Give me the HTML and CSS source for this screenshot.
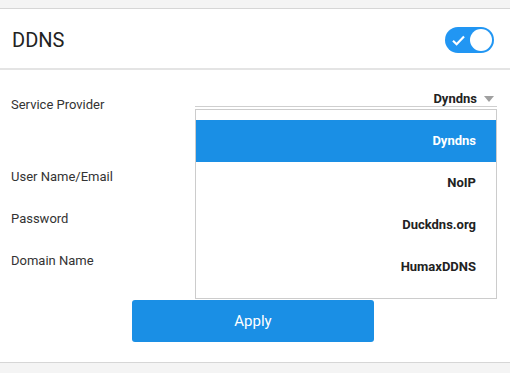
FILE: index.html
```html
<!DOCTYPE html>
<html lang="en">

<head>
    <meta charset="UTF-8">
    <meta name="viewport" content="width=device-width, initial-scale=1">
    <title>DDNS</title>
    <link rel="stylesheet" href="styles.css">
</head>

<body>
    <section class="card">
        <header class="card-header">
            <h2>DDNS</h2>
            <label class="switch on">
                <svg class="switch-check" width="13" height="11" viewBox="0 0 13 11">
                    <path d="M1 5.8 L4.6 9.2 L12 1.6" fill="none" stroke="#fff" stroke-width="2.2"/>
                </svg>
                <span class="switch-knob"></span>
            </label>
        </header>

        <form class="ddns-form">
            <div class="row row-select">
                <span class="label">Service Provider</span>
                <div class="select">
                    <span class="select-value">Dyndns</span>
                    <span class="select-arrow"></span>
                    <ul class="options">
                        <li class="active">Dyndns</li>
                        <li>NoIP</li>
                        <li>Duckdns.org</li>
                        <li>HumaxDDNS</li>
                    </ul>
                </div>
            </div>
            <div class="row row-gap">
                <span class="label">User Name/Email</span>
            </div>
            <div class="row">
                <span class="label">Password</span>
            </div>
            <div class="row">
                <span class="label">Domain Name</span>
            </div>
            <button type="button" class="apply">Apply</button>
        </form>
    </section>
</body>

</html>
```

FILE: styles.css
```css
/* Base */
* {
    margin: 0;
    padding: 0;
    box-sizing: border-box;
}

body {
    font-family: Roboto, Arial, sans-serif;
    background-color: #f4f4f4;
    color: #333;
    padding-top: 8px;
}

/* Card */
.card {
    background-color: #fff;
    border-top: 1px solid #d6d6d6;
    border-bottom: 1px solid #d6d6d6;
}

.card-header {
    height: 61px;
    padding: 3px 16px 0 12px;
    display: flex;
    align-items: center;
    justify-content: space-between;
    border-bottom: 2px solid #e4e4e4;
}

.card-header h2 {
    font-size: 20px;
    font-weight: 400;
    color: #222;
}

/* Toggle */
.switch {
    width: 49px;
    height: 26px;
    border-radius: 13px;
    background-color: #2196f3;
    display: flex;
    align-items: center;
    justify-content: space-between;
    padding: 0 2px 0 7px;
}

.switch-check {
    display: block;
}

.switch-knob {
    width: 22px;
    height: 22px;
    border-radius: 50%;
    background-color: #fff;
}

/* Form */
.ddns-form {
    padding: 12px 13px 20px 11px;
}

.row {
    display: flex;
    height: 42px;
    align-items: center;
}

.row-select {
    align-items: flex-start;
}

.row-gap {
    margin-top: 31px;
}

.label {
    width: 184px;
    font-size: 13px;
    line-height: 42px;
    padding-top: 2px;
    color: #333;
}

/* Select */
.select {
    position: relative;
    flex: 1;
    margin-top: 9px;
    height: 16px;
    border-bottom: 1px solid #cfcfcf;
    display: flex;
    justify-content: flex-end;
    align-items: center;
    padding-right: 3px;
}

.select-value {
    font-size: 13px;
    font-weight: 700;
    color: #222;
    line-height: 15px;
}

.select-arrow {
    margin-left: 7px;
    width: 0;
    height: 0;
    border-left: 5px solid transparent;
    border-right: 5px solid transparent;
    border-top: 6px solid #a0a0a0;
}

.options {
    position: absolute;
    top: 18px;
    left: 0;
    right: 0;
    list-style: none;
    background-color: #fff;
    border: 1px solid #cccccc;
    padding: 10px 0;
}

.options li {
    height: 42px;
    line-height: 42px;
    text-align: right;
    padding-right: 20px;
    font-size: 13px;
    font-weight: 700;
    color: #222;
}

.options li.active {
    background-color: #1a8fe5;
    color: #fff;
}

/* Button */
.apply {
    display: block;
    margin: 19px 0 0 121px;
    width: 242px;
    height: 42px;
    border: none;
    border-radius: 3px;
    background-color: #1a8fe5;
    color: #fff;
    font-family: Roboto, Arial, sans-serif;
    font-size: 15px;
}
```
